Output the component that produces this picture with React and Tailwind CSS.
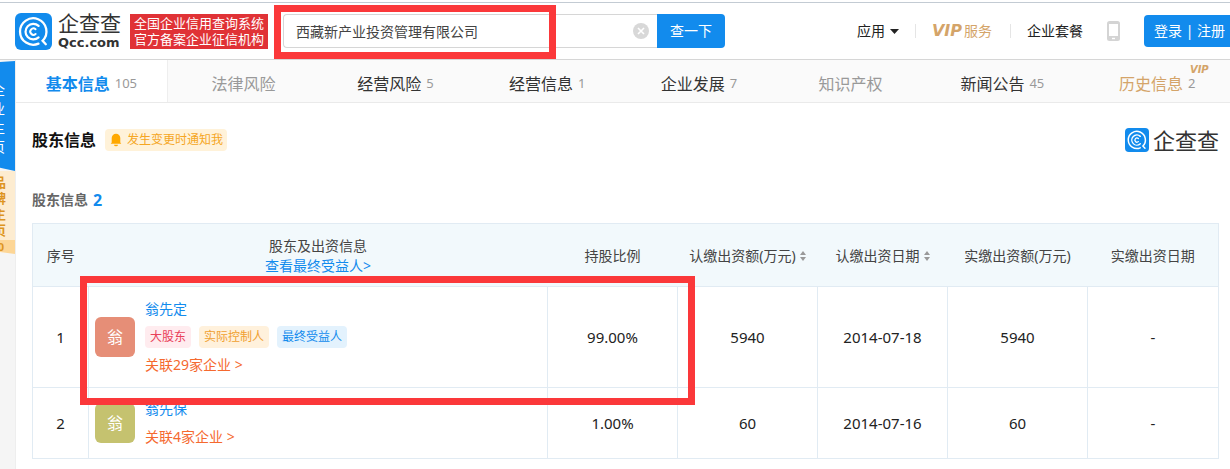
import React, { useState } from 'react';
import clsx from 'clsx';

const tabs = [
  { label: '基本信息', count: 105, active: true },
  { label: '法律风险', muted: true },
  { label: '经营风险', count: 5 },
  { label: '经营信息', count: 1 },
  { label: '企业发展', count: 7 },
  { label: '知识产权', muted: true },
  { label: '新闻公告', count: 45 },
  { label: '历史信息', count: 2, vip: true },
];

const shareholders = [
  {
    id: 1,
    name: '翁先定',
    avatar: 'bg-[#e68e77]',
    tags: [
      { text: '大股东', style: 'bg-[#ffecef] text-[#e9415a]' },
      { text: '实际控制人', style: 'bg-[#fff1dc] text-[#f0a030]' },
      { text: '最终受益人', style: 'bg-[#e3f2fd] text-[#128bed]' },
    ],
    related: 29,
    ratio: '99.00%',
    subscribed: '5940',
    subscribedDate: '2014-07-18',
    paid: '5940',
    paidDate: '-',
  },
  {
    id: 2,
    name: '翁先保',
    avatar: 'bg-[#c5c26f]',
    tags: [],
    related: 4,
    ratio: '1.00%',
    subscribed: '60',
    subscribedDate: '2014-07-16',
    paid: '60',
    paidDate: '-',
  },
];

const LogoMark = ({ className }) => (
  <svg viewBox="0 0 37 37" fill="none" stroke="#fff" strokeLinecap="round" className={className} aria-hidden="true">
    <rect width="37" height="37" rx="6" fill="#128bed" stroke="none" />
    <path d="M23.5 30.6A13.200 13.200 0 1 1 27.6 27.800L30.800 31.200" strokeWidth="2.3" />
    <path d="M23.6 24.400A7.800 7.800 0 1 1 23.6 12.900" strokeWidth="2.2" />
    <path d="M20.6 21A3.200 3.200 0 1 1 20.6 16.200" strokeWidth="2" />
  </svg>
);

const SortIcon = () => (
  <svg viewBox="0 0 6 10" className="w-[6px] h-[10px]" fill="#999" aria-hidden="true">
    <path d="M3 0 6 4H0ZM3 10 0 6H6Z" />
  </svg>
);

const Divider = () => <span className="w-px h-[14px] bg-[#e5e5e5]" />;

const Header = () => {
  const [keyword, setKeyword] = useState('西藏新产业投资管理有限公司');

  return (
    <header className="mt-[2px] h-[58px] flex items-center border-t border-[#c3cbd3] border-b border-b-[#d6d6d6] bg-white">
      <a href="#home" className="ml-[15px] flex shrink-0 items-center gap-[6px]">
        <LogoMark className="w-[37px] h-[37px]" />
        <span className="w-[66px] flex flex-col text-[#333]">
          <span className="text-[21px] leading-6">企查查</span>
          <span className="font-['DejaVu_Sans'] text-[13px] leading-4 font-bold">Qcc.com</span>
        </span>
      </a>
      <div className="ml-[6px] w-[138px] h-[35px] shrink-0 flex flex-col items-center justify-center bg-[#e03236] text-[13px] leading-4 text-white">
        <span>全国企业信用查询系统</span>
        <span>官方备案企业征信机构</span>
      </div>

      <form className="relative ml-[15px] w-[442px] flex" onSubmit={(e) => e.preventDefault()}>
        <div className="relative flex-1">
          <input
            aria-label="企业名称"
            value={keyword}
            onChange={(e) => setKeyword(e.target.value)}
            className="w-full h-[34px] pl-3 pr-8 rounded-l border border-r-0 border-[#d6d6d6] text-sm text-[#444] outline-none"
          />
          <button type="button" aria-label="清空" onClick={() => setKeyword('')} className="absolute right-2 top-[9px]">
            <svg viewBox="0 0 16 16" className="w-4 h-4" aria-hidden="true">
              <circle cx="8" cy="8" r="8" fill="#d8d8d8" />
              <path d="m5 5 6 6m0-6-6 6" stroke="#fff" strokeWidth="1.6" />
            </svg>
          </button>
        </div>
        <button type="submit" className="w-[68px] h-[34px] rounded-r-sm bg-[#128bed] text-sm text-white">查一下</button>
        <div className="absolute -left-[9px] -top-[9px] w-[282px] h-[54px] border-[7px] border-[#fb383a] pointer-events-none" />
      </form>

      <nav className="ml-auto flex shrink-0 items-center text-sm text-[#222]">
        <button type="button" className="mr-4 flex items-center gap-[5px]">
          应用
          <svg viewBox="0 0 9 5" className="w-[9px] h-[5px]" fill="#222" aria-hidden="true"><path d="M0 0h9L4.500 5z" /></svg>
        </button>
        <Divider />
        <a href="#vip" className="ml-4 mr-[18px] flex items-center gap-[2px] text-[#d4a469]">
          <span className="font-['DejaVu_Sans'] text-base font-bold italic">VIP</span>
          服务
        </a>
        <Divider />
        <a href="#plans" className="ml-4">企业套餐</a>
        <a href="#app" aria-label="手机版" className="mx-6">
          <svg viewBox="0 0 13 20" className="w-[13px] h-5" aria-hidden="true">
            <rect width="13" height="20" rx="2.5" fill="#d4d4d4" />
            <path d="M2 3h9v12H2z" fill="#fff" />
            <path d="M5 17.500h3" stroke="#fff" strokeWidth="1.400" />
          </svg>
        </a>
        <button type="button" className="h-8 pl-[10px] pr-[5px] rounded-l-sm bg-[#128bed] text-white">登录 | 注册</button>
      </nav>
    </header>
  );
};

const SideTabs = () => (
  <aside className="w-4 shrink-0 overflow-hidden border-r border-[#eee] bg-[#f5f5f5]">
    <a
      href="#company"
      className="mt-px h-[110px] flex items-center justify-end pr-[10px] bg-[#128bed] text-sm leading-[19px] text-white [clip-path:polygon(0_1%,100%_0,100%_100%,0_97%)]"
    >
      <span className="w-[14px] shrink-0 pt-1">企业主页</span>
    </a>
    <a
      href="#brand"
      className="h-[69px] flex items-center justify-end pr-[9px] bg-[#fdecd0] text-[13px] leading-4 font-bold text-[#dd9420]"
    >
      <span className="w-[13px] shrink-0">品牌主页</span>
    </a>
    <div className="h-[14px] flex items-center justify-end pr-[11px] bg-[#fdd696] text-[11px] font-bold text-[#dd9420] [clip-path:polygon(0_0,100%_0,100%_100%,0_85%)]">
      0
    </div>
  </aside>
);

const Tabs = () => (
  <nav className="h-[43px] grid grid-cols-8 border-b border-[#eaeaea] bg-[#fafafa]">
    {tabs.map((tab) => (
      <a
        key={tab.label}
        href={`#${tab.label}`}
        className={clsx(
          'flex items-center justify-center gap-[5px] pt-[6px] text-base',
          tab.active && 'bg-white border-r border-[#eee] font-bold text-[#128bed]',
          tab.muted && 'text-[#999]',
          tab.vip && 'pl-[6px] text-[#d4a469]',
          !tab.active && !tab.muted && !tab.vip && 'text-[#333]'
        )}
      >
        {tab.label}
        {tab.count && (
          <span className="relative text-[13px] font-normal text-[#999]">
            {tab.count}
            {tab.vip && (
              <span className="absolute left-[2px] -top-[10px] font-['DejaVu_Sans'] text-[10px] leading-3 font-bold italic text-[#d4a469]">
                VIP
              </span>
            )}
          </span>
        )}
      </a>
    ))}
  </nav>
);

const ShareholderTable = () => (
  <div className="relative mt-[11px]">
    <table className="w-full table-fixed border-collapse border border-[#e1ebf3] text-[15px] text-center text-[#222]">
      <colgroup>
        <col className="w-[56px]" />
        <col />
        <col className="w-[130px]" />
        <col className="w-[140px]" />
        <col className="w-[130px]" />
        <col className="w-[140px]" />
        <col className="w-[131px]" />
      </colgroup>
      <thead>
        <tr className="h-[63px] bg-[#f2f9fc] text-sm text-[#444] [&>th]:font-normal [&>th]:pt-[2px]">
          <th>序号</th>
          <th className="leading-5">
            股东及出资信息
            <a href="#beneficiary" className="block text-[#128bed]">查看最终受益人&gt;</a>
          </th>
          <th>持股比例</th>
          <th>
            <button type="button" className="inline-flex items-center gap-1">认缴出资额(万元)<SortIcon /></button>
          </th>
          <th>
            <button type="button" className="inline-flex items-center gap-1">认缴出资日期<SortIcon /></button>
          </th>
          <th>实缴出资额(万元)</th>
          <th>实缴出资日期</th>
        </tr>
      </thead>
      <tbody>
        {shareholders.map((item) => (
          <tr key={item.id} className={clsx('[&>td]:border [&>td]:border-[#e1ebf3]', item.tags.length ? 'h-[101px]' : 'h-[71px]')}>
            <td>{item.id}</td>
            <td className="px-[6px] text-left">
              <div className="flex items-center gap-[10px]">
                <span className={clsx('w-10 h-10 shrink-0 rounded-md flex items-center justify-center text-base text-white', item.avatar)}>
                  {item.name[0]}
                </span>
                <div className="text-sm leading-7">
                  <a href={`#person-${item.id}`} className="block w-fit text-[#128bed]">{item.name}</a>
                  {item.tags.length > 0 && (
                    <div className="h-7 flex items-center gap-2">
                      {item.tags.map((tag) => (
                        <span key={tag.text} className={clsx('px-[5px] rounded-sm text-xs leading-[22px]', tag.style)}>{tag.text}</span>
                      ))}
                    </div>
                  )}
                  <a href={`#related-${item.id}`} className="block w-fit text-[#f5692f]">关联{item.related}家企业 &gt;</a>
                </div>
              </div>
            </td>
            <td>{item.ratio}</td>
            <td>{item.subscribed}</td>
            <td>{item.subscribedDate}</td>
            <td>{item.paid}</td>
            <td>{item.paidDate}</td>
          </tr>
        ))}
      </tbody>
    </table>
    <div className="absolute left-12 top-[53px] w-[615px] h-[129px] border-[7px] border-[#fb383a] pointer-events-none" />
  </div>
);

const App = () => (
  <div className="min-h-screen flex flex-col bg-white font-['Noto_Sans','Noto_Sans_CJK_SC',sans-serif]">
    <Header />
    <div className="flex-1 flex">
      <SideTabs />
      <div className="flex-1 min-w-0">
        <Tabs />
        <main className="pl-4 pr-[11px]">
          <div className="mt-6 flex items-center">
            <h2 className="text-base font-bold text-[#111]">股东信息</h2>
            <button type="button" className="ml-[9px] h-[22px] px-1 flex items-center gap-1 rounded-sm bg-[#fff2d9] text-xs text-[#f5a623]">
              <svg viewBox="0 0 14 14" className="w-[14px] h-[14px]" fill="#ffa800" aria-hidden="true">
                <path d="M7 .8a4.300 4.300 0 0 1 4.300 4.300v4.400l1 1.300H1.700l1-1.300V5.100A4.300 4.300 0 0 1 7 .8ZM5 11.700h4a2 1.500 0 0 1-4 0Z" />
              </svg>
              发生变更时通知我
            </button>
            <div className="ml-auto flex items-center gap-1 text-[22px] leading-[26px] text-[#333]">
              <LogoMark className="w-6 h-6" />
              企查查
            </div>
          </div>
          <h3 className="mt-[35px] flex items-center gap-[5px] text-sm leading-6 font-bold text-[#666]">
            股东信息 <span className="text-base leading-6 text-[#128bed]">2</span>
          </h3>
          <ShareholderTable />
        </main>
      </div>
    </div>
  </div>
);

export default App;
